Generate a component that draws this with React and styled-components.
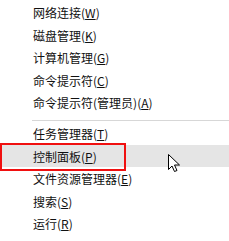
import styled, { createGlobalStyle } from 'styled-components';

const GlobalStyle = createGlobalStyle`
  html, body {
    margin: 0;
    padding: 0;
    background: #ffffff;
  }
  body {
    font-family: "Noto Sans CJK SC", "Noto Sans", sans-serif;
  }
`;

const Menu = styled.div`
  width: 229px;
  height: 241px;
  background: #ffffff;
  padding-top: 1px;
  box-sizing: border-box;
  overflow: hidden;
`;

const Group = styled.div`
  display: flex;
  flex-direction: column;
`;

const Separator = styled.div`
  height: 1px;
  margin: 6px 0 1.5px 32px;
  background: #d7d7d7;
`;

const Item = styled.div`
  position: relative;
  height: 22.5px;
  display: flex;
  align-items: center;
  padding: 2px 0 0 33px;
  box-sizing: border-box;
  font-size: 12px;
  line-height: 14px;
  color: #111111;
  white-space: nowrap;
  background: ${(p) => (p.$active ? '#e5e5e5' : 'transparent')};
`;

const Frame = styled.div`
  position: absolute;
  left: 0;
  top: -2px;
  width: 126px;
  height: 28px;
  border: 2px solid #f01010;
  box-sizing: border-box;
`;

const Key = styled.span`
  text-decoration: underline;
  text-underline-offset: 1px;
`;

const Pointer = styled.svg`
  position: absolute;
  left: 168px;
  top: 9px;
`;

const groups = [
  [
    ['网络连接', 'W'],
    ['磁盘管理', 'K'],
    ['计算机管理', 'G'],
    ['命令提示符', 'C'],
    ['命令提示符(管理员)', 'A'],
  ],
  [
    ['任务管理器', 'T'],
    ['控制面板', 'P'],
    ['文件资源管理器', 'E'],
    ['搜索', 'S'],
    ['运行', 'R'],
  ],
];

function Cursor() {
  return (
    <Pointer width="13" height="19" viewBox="0 0 13 19">
      <path
        d="M0.5 0.5 L0.5 15.5 L4 12 L6.5 17.5 L9 16.5 L6.5 11 L11.5 11 Z"
        fill="#ffffff"
        stroke="#000000"
        strokeWidth="1"
        strokeLinejoin="miter"
      />
    </Pointer>
  );
}

function App() {
  return (
    <>
      <GlobalStyle />
      <Menu>
        {groups.map((items, gi) => (
          <div key={gi}>
            {gi > 0 && <Separator />}
            <Group>
              {items.map(([label, key]) => {
                const active = key === 'P';
                return (
                  <Item key={key} $active={active}>
                    {label}(<Key>{key}</Key>)
                    {active && <Frame />}
                    {active && <Cursor />}
                  </Item>
                );
              })}
            </Group>
          </div>
        ))}
      </Menu>
    </>
  );
}

export default App;
